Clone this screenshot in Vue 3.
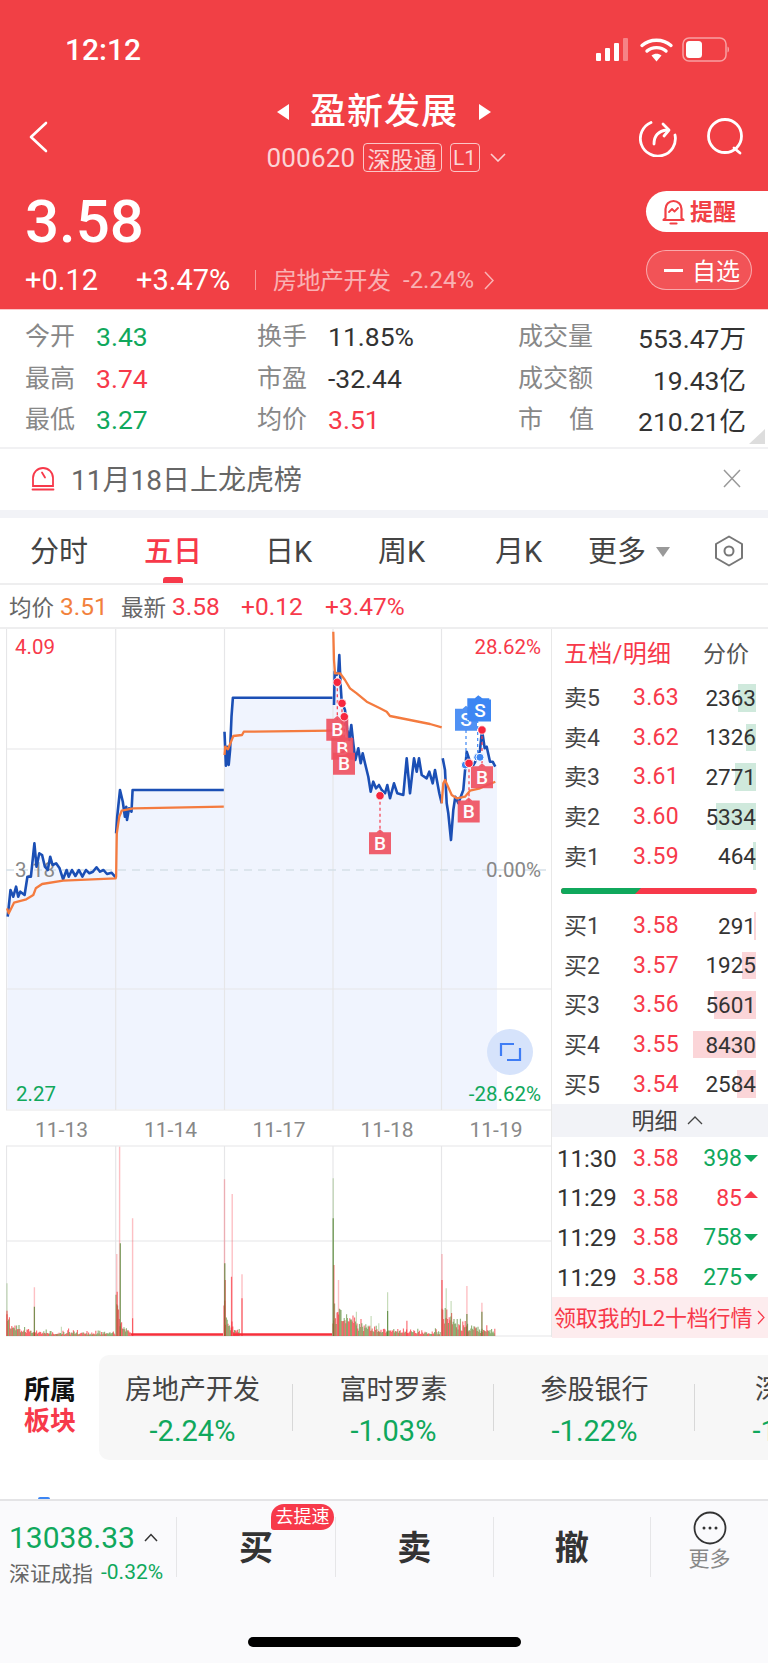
<script setup>
const z3 = (a) => { const o = []; for (let i = 0; i < a.length; i += 2) o.push([+(a[i] / 2.851).toFixed(1), +(620 + a[i + 1] / 3).toFixed(1)]); return o }
const z9 = (a) => { const o = []; for (let i = 0; i < a.length; i += 2) o.push([+(310 + a[i] / 3).toFixed(1), +(630 + a[i + 1] / 3).toFixed(1)]); return o }
const pts = (p) => p.map((q) => q.join(',')).join(' ')

const b1 = z3([22,890,30,810,38,830,46,800,52,830,58,815,70,825,78,770,88,770,98,670,104,740,112,700,120,705,128,740,136,750,143,710,150,735,160,730,170,745,180,778,190,750,196,770,205,750,215,768,225,750,235,770,245,750,255,760,265,755,275,742,285,755,295,750,305,762,318,758,330,772])
const b2 = z3([331,640,334,590,342,510,350,545,356,590,360,560,362,600,368,565,375,575,378,510,638,510])
const b3 = z3([640,335,644,437,648,380,652,435,656,390,660,290,664,233,948,233])
const b4 = z9([72,225,74,125,80,135,85,125,88,75,92,170,95,215,105,240,112,300,118,330,124,285,130,340,136,390,145,355,152,400,158,370,165,400,175,440,182,485,190,455,198,475,207,465,215,480,225,490,232,465,240,505,252,460,262,490,280,495,290,385,300,490,312,385,320,425,327,385,335,435,350,445,358,425,368,460,375,420,388,490,395,520])
const b5 = z9([398,385,405,420,410,520,415,550,423,630,430,540,436,500,445,520,460,480,470,365,480,395,490,405,505,380,510,360,516,300,524,355,530,350,540,395,548,395,556,410])
const blue = [b1, b2, b3, b4, b5].map(pts)
const fill = pts([[7, 1109], ...b1, ...b2, ...b3, ...b4, ...b5, [497, 767], [497, 1109]])

const orange = [
  pts(z3([20,865,25,880,40,848,75,838,95,825,102,805,120,792,180,782,330,775,331,770,333,640,340,590,347,572,380,565,638,560])),
  pts(z3([640,405,642,380,650,388,665,348,690,345,695,335,948,332])),
  pts(z9([70,5,72,90,75,130,90,130,105,150,120,175,140,190,170,215,210,235,230,245,240,258,300,270,360,282,395,292])),
  pts(z9([395,520,400,460,405,450,412,465,425,495,440,505,465,500,480,482,510,475,556,455]))
]

const vlines = [115.7, 224.5, 333, 441.5]
const dates = [{ x: 61.5, t: '11-13' }, { x: 170.5, t: '11-14' }, { x: 279, t: '11-17' }, { x: 387, t: '11-18' }, { x: 496, t: '11-19' }]

const tags = [
  ...z9([468,268]).map((p) => ({ p, t: 'S', c: 's', o: 0.9 })),
  ...z9([505,236,510,240]).map((p) => ({ p, t: 'S', c: 's', o: 1 })),
  ...z9([82,298,97,355,102,400,210,638,476,543,516,440]).map((p) => ({ p, t: 'B', c: 'b', o: 0.9 }))
]
const links = z9([82,157,82,270,96,220,96,330,103,260,103,375,210,497,210,610,477,400,477,515,516,300,516,410])
const linkPairs = [0, 2, 4, 6, 8, 10].map((i) => [links[i], links[i + 1]])
const blueLinks = [z9([468,300,468,405]), z9([503,270,503,382])]
const redDots = z9([82,157,96,220,103,260,210,497,477,400,516,300])
const blueDots = z9([466,405,503,382,510,382])

// volume bars
let seed = 42
const rnd = () => { seed = (seed * 9301 + 49297) % 233280; return seed / 233280 }
const BASE = 1336
const vy = (y) => 1130 + y / 3
const mk = (list) => list.map(([x, y]) => `M${(x / 2.851).toFixed(1)} ${BASE}V${vy(y).toFixed(1)}`).join('')
const redLight = mk([[341,50],[333,372],[378,265],[640,148],[662,192],[690,433],[965,450],[1260,372],[1331,468],[1374,518],[98,472]])
const greenLight = mk([[20,460],[950,145],[1105,487],[1272,475],[1286,513],[1016,545],[1058,558],[175,590],[1080,580]])
const redDark = mk([[20,542],[378,565],[660,440],[690,505],[952,405],[1260,450],[1160,572],[334,485],[642,450]])
const greenDark = mk([[98,530],[343,340],[641,400],[950,265],[1105,543],[1331,552],[1374,545]])
const days = [[7, 115, 16, 12], [116, 131, 42, 5], [224, 240, 38, 5], [333, 441, 34, 24], [442, 495, 32, 20]]
let vr = ''
let vg = ''
for (const [a, b, amp, tau] of days) {
  for (let x = a; x <= b; x += 0.8) {
    const h = 1.5 + amp * Math.exp(-(x - a) / tau) * (0.3 + rnd() * 0.7) + rnd() * rnd() * 7
    const s = `M${x.toFixed(1)} ${BASE}V${(BASE - h).toFixed(1)}`
    if (rnd() > 0.5) vr += s
    else vg += s
  }
}

const sells = [
  { l: '卖5', p: '3.63', q: 2363, w: 18 }, { l: '卖4', p: '3.62', q: 1326, w: 10 },
  { l: '卖3', p: '3.61', q: 2771, w: 21 }, { l: '卖2', p: '3.60', q: 5334, w: 40 },
  { l: '卖1', p: '3.59', q: 464, w: 3 }
]
const buys = [
  { l: '买1', p: '3.58', q: 291, w: 2 }, { l: '买2', p: '3.57', q: 1925, w: 14 },
  { l: '买3', p: '3.56', q: 5601, w: 42 }, { l: '买4', p: '3.55', q: 8430, w: 63 },
  { l: '买5', p: '3.54', q: 2584, w: 19 }
]
const ticks = [
  { t: '11:30', q: 398, up: false }, { t: '11:29', q: 85, up: true },
  { t: '11:29', q: 758, up: false }, { t: '11:29', q: 275, up: false }
]
const sectors = [
  { n: '房地产开发', v: '-2.24%' }, { n: '富时罗素', v: '-1.03%' },
  { n: '参股银行', v: '-1.22%' }, { n: '深股通', v: '-1.10%' }
]
</script>

<template>
  <div class="page">
    <header class="head">
      <div class="status">
        <span class="clock">12:12</span>
        <svg class="st-icons" width="134" height="26" viewBox="0 0 134 26">
          <g fill="#fff">
            <rect x="1" y="16" width="5" height="8" rx="1" />
            <rect x="10" y="11" width="5" height="13" rx="1" />
            <rect x="19" y="6" width="5" height="18" rx="1" />
            <rect x="28" y="1" width="5" height="23" rx="1" opacity=".35" />
          </g>
          <g fill="none" stroke="#fff" stroke-width="3.4" stroke-linecap="round">
            <path d="M47 8.5c8-7 21-7 29 0" />
            <path d="M52 14c5-4.5 14-4.5 19 0" />
          </g>
          <path d="M56.5 18.5c3-2.4 7-2.4 10 0L61.5 24.5z" fill="#fff" />
          <rect x="88" y="1" width="43" height="23" rx="6" fill="none" stroke="#fff" stroke-opacity=".5" stroke-width="1.5" />
          <rect x="91" y="4" width="16" height="17" rx="3.5" fill="#fff" />
          <path d="M132.5 9.5c2 .6 2 5.400 0 6z" fill="#fff" fill-opacity=".5" />
        </svg>
      </div>

      <div class="nav">
        <svg class="back" width="20" height="32" viewBox="0 0 20 32"><path d="M18 2 3 16l15 14" fill="none" stroke="#fff" stroke-width="2.600" stroke-linecap="round" stroke-linejoin="round" /></svg>
        <div class="nav-mid">
          <div class="title-row">
            <i class="tri-l"></i>
            <span class="title">盈新发展</span>
            <i class="tri-r"></i>
          </div>
          <div class="code-row">
            <span class="code">000620</span>
            <span class="tag tag-wide">深股通</span>
            <span class="tag tag-l1">L1</span>
            <svg width="16" height="9" viewBox="0 0 16 9"><path d="M1 1l7 7 7-7" fill="none" stroke="#fff" stroke-opacity=".75" stroke-width="1.600" /></svg>
          </div>
        </div>
        <div class="nav-icons">
          <svg width="38" height="40" viewBox="0 0 38 40" fill="none" stroke="#fff" stroke-width="2.800" stroke-linecap="round" stroke-linejoin="round">
            <path d="M12 5.500A17.500 17.500 0 1 0 36 18" />
            <path d="M15 27c0-8 4-13 13-14" />
            <path d="M24 7l6 6-5 6" />
          </svg>
          <svg width="40" height="40" viewBox="0 0 40 40" fill="none" stroke="#fff" stroke-width="2.800" stroke-linecap="round">
            <circle cx="19" cy="19" r="16.500" />
            <path d="M28 31l6 5" />
          </svg>
        </div>
      </div>

      <div class="quote">
        <div class="quote-l">
          <div class="price">3.58</div>
          <div class="delta">
            <span class="d1">+0.12</span>
            <span class="d2">+3.47%</span>
            <i class="vbar"></i>
            <span class="ind">房地产开发</span>
            <span class="ind-v">-2.24%</span>
            <svg width="10" height="19" viewBox="0 0 10 19"><path d="M1 1l8 8.500-8 8.500" fill="none" stroke="#fff" stroke-opacity=".6" stroke-width="1.500" /></svg>
          </div>
        </div>
        <div class="quote-r">
          <div class="remind">
            <svg width="23" height="26" viewBox="0 0 23 26" fill="none" stroke="#f14045" stroke-width="2.200" stroke-linejoin="round" stroke-linecap="round">
              <path d="M3.500 19V10a8 8 0 0 1 16 0v9l2 2H1.500z" />
              <path d="M8.500 24.500h6" />
              <path d="M7 13l3-3 2.500 2.500L16 9" stroke-width="1.800" />
            </svg>
            <span>提醒</span>
          </div>
          <div class="fav"><i class="minus"></i><span>自选</span></div>
        </div>
      </div>
    </header>

    <section class="stats">
      <div class="st"><span class="lb">今开</span><span class="v green">3.43</span></div>
      <div class="st"><span class="lb">换手</span><span class="v">11.85%</span></div>
      <div class="st st-r"><span class="lb lb3">成交量</span><span class="v">553.47万</span></div>
      <div class="st"><span class="lb">最高</span><span class="v red">3.74</span></div>
      <div class="st"><span class="lb">市盈</span><span class="v">-32.44</span></div>
      <div class="st st-r"><span class="lb lb3">成交额</span><span class="v">19.43亿</span></div>
      <div class="st"><span class="lb">最低</span><span class="v green">3.27</span></div>
      <div class="st"><span class="lb">均价</span><span class="v red">3.51</span></div>
      <div class="st st-r"><span class="lb lb3 lb-j"><b>市</b><b>值</b></span><span class="v">210.21亿</span></div>
      <i class="corner"></i>
    </section>

    <section class="notice">
      <div class="notice-l">
        <svg width="24" height="25" viewBox="0 0 24 25" fill="none" stroke="#f7394a" stroke-width="1.800" stroke-linecap="round">
          <path d="M2 20V12a10 10 0 0 1 20 0v8z" />
          <path d="M1.500 23.500h21" />
          <path d="M11 6.500l3 5" />
        </svg>
        <span>11月18日上龙虎榜</span>
      </div>
      <svg width="18" height="19" viewBox="0 0 18 19"><path d="M1 1l16 17M17 1 1 18" stroke="#999" stroke-width="1.500" fill="none" /></svg>
    </section>

    <nav class="tabs">
      <span class="tab" style="left:30px">分时</span>
      <span class="tab on" style="left:144px">五日</span>
      <span class="tab" style="left:265px">日K</span>
      <span class="tab" style="left:378px">周K</span>
      <span class="tab" style="left:495px">月K</span>
      <span class="tab" style="left:588px">更多</span>
      <i class="more-tri"></i>
      <svg class="hex" width="30" height="32" viewBox="0 0 30 32" fill="none" stroke="#777" stroke-width="2">
        <path d="M15 1.500 28 9v14l-13 7.500L2 23V9z" stroke-linejoin="round" />
        <circle cx="15" cy="16" r="4.500" />
      </svg>
      <i class="under"></i>
    </nav>

    <div class="legend">
      <span class="g">均价</span><span class="o">3.51</span>
      <span class="g g2">最新</span><span class="r r1">3.58</span>
      <span class="r r2">+0.12</span>
      <span class="r r3">+3.47%</span>
    </div>

    <section class="board">
      <svg class="chart" width="545" height="708" viewBox="6 629 545 708">
        <polygon :points="fill" fill="#f0f4fe" />
        <g stroke="#e6e6e8" stroke-width="1.200">
          <path d="M6.500 629V1110M6 749H551M6 989H551M6 1110H551" fill="none" />
          <path v-for="x in vlines" :key="x" :d="`M${x} 629V1110`" fill="none" />
          <path d="M6.500 1146V1336M6 1146H551M6 1241H551M6 1336H551" fill="none" />
          <path v-for="x in vlines" :key="'v' + x" :d="`M${x} 1146V1336`" fill="none" />
        </g>
        <path d="M6 870H551" stroke="#d5dfe8" stroke-width="1.400" stroke-dasharray="8 6" fill="none" />

        <text x="15" y="877" class="cl gray-f">3.18</text>
        <polyline v-for="(p, i) in blue" :key="'b' + i" :points="p" class="ln-b" />
        <polyline v-for="(p, i) in orange" :key="'o' + i" :points="p" class="ln-o" />

        <path v-for="(l, i) in blueLinks" :key="'bl' + i" :d="`M${l[0][0]} ${l[0][1]}V${l[1][1]}`" stroke="#3d86f3" stroke-width="1.200" stroke-dasharray="3 3" fill="none" />
        <path v-for="(l, i) in linkPairs" :key="'rl' + i" :d="`M${l[0][0]} ${l[0][1]}V${l[1][1]}`" stroke="#f7394a" stroke-width="1.200" stroke-dasharray="3 3" fill="none" />
        <circle v-for="(d, i) in blueDots" :key="'bd' + i" :cx="d[0]" :cy="d[1]" r="4" fill="#3d86f3" stroke="#fff" />

        <g v-for="(t, i) in tags" :key="'t' + i" :opacity="t.o">
          <path :d="`M${t.p[0] - 11} ${t.p[1] - 10.500}h7.500l3.500-3 3.500 3h7.500v22h-22z`" :fill="t.c === 's' ? '#3d86f3' : '#ef4f5f'" />
          <text :x="t.p[0]" :y="t.p[1] + 7" class="tg">{{ t.t }}</text>
        </g>
        <circle v-for="(d, i) in redDots" :key="'rd' + i" :cx="d[0]" :cy="d[1]" r="4.200" fill="#f7273f" stroke="#fff" stroke-width=".8" />

        <text x="15" y="654" class="cl red-f">4.09</text>
        <text x="541" y="654" class="cl red-f end">28.62%</text>
        <text x="541" y="877" class="cl gray-f end">0.00%</text>
        <text x="16" y="1101" class="cl green-f">2.27</text>
        <text x="541" y="1101" class="cl green-f end">-28.62%</text>

        <circle cx="510" cy="1052" r="23" fill="#d6e3fb" />
        <path d="M501 1056v-12h13M520 1048v12h-13" fill="none" stroke="#3f7df5" stroke-width="2.200" />

        <text v-for="d in dates" :key="d.t" :x="d.x" y="1137" class="dt">{{ d.t }}</text>

        <path :d="vr" stroke="#f7272f" stroke-opacity=".7" stroke-width="1.100" fill="none" />
        <path :d="vg" stroke="#5f8f3a" stroke-opacity=".7" stroke-width="1.100" fill="none" />
        <path d="M131 1334.500H223M233 1334.500H332" stroke="#f7303c" stroke-width="2.500" fill="none" />
        <path :d="redLight" stroke="#f7303c" stroke-opacity=".3" stroke-width="1.400" fill="none" />
        <path :d="greenLight" stroke="#5f9c3a" stroke-opacity=".35" stroke-width="1.200" fill="none" />
        <path :d="redDark" stroke="#f7272f" stroke-opacity=".65" stroke-width="1.200" fill="none" />
        <path :d="greenDark" stroke="#4e7f2c" stroke-opacity=".75" stroke-width="1.200" fill="none" />
      </svg>

      <aside class="panel">
        <div class="p-head"><span class="p-on">五档/明细</span><span class="p-off">分价</span></div>
        <div v-for="r in sells" :key="r.l" class="row">
          <i class="bar bar-g" :style="{ width: r.w + 'px' }"></i>
          <span class="r-l">{{ r.l }}</span><span class="r-p">{{ r.p }}</span><span class="r-q">{{ r.q }}</span>
        </div>
        <div class="split"><i class="split-g"></i></div>
        <div v-for="r in buys" :key="r.l" class="row">
          <i class="bar bar-r" :style="{ width: r.w + 'px' }"></i>
          <span class="r-l">{{ r.l }}</span><span class="r-p">{{ r.p }}</span><span class="r-q">{{ r.q }}</span>
        </div>
        <div class="strip">
          <span>明细</span>
          <svg width="16" height="9" viewBox="0 0 16 9"><path d="M1 8l7-7 7 7" fill="none" stroke="#444" stroke-width="1.300" /></svg>
        </div>
        <div class="tick-list">
          <div v-for="(t, i) in ticks" :key="i" class="tick">
            <span class="t-t">{{ t.t }}</span><span class="r-p">3.58</span>
            <span class="t-q" :class="t.up ? 'up' : 'dn'">{{ t.q }}</span>
            <i :class="t.up ? 'tri-up' : 'tri-dn'"></i>
          </div>
        </div>
        <div class="promo"><span>领取我的L2十档行情</span>
          <svg width="8" height="15" viewBox="0 0 8 15"><path d="M1 1l6 6.500-6 6.500" fill="none" stroke="#f7394a" stroke-width="1.200" /></svg>
        </div>
      </aside>
    </section>

    <section class="sector">
      <div class="sec-title"><span>所属</span><span class="sec-red">板块</span></div>
      <div class="sec-card">
        <div class="sec-row">
          <div v-for="s in sectors" :key="s.n" class="sec-item">
            <div class="sec-n">{{ s.n }}</div>
            <div class="sec-v">{{ s.v }}</div>
          </div>
        </div>
      </div>
    </section>

    <div class="peek"><i></i></div>

    <footer class="foot">
      <div class="foot-row">
        <div class="idx">
          <div class="idx-top">
            <span class="idx-num">13038.33</span>
            <svg width="14" height="9" viewBox="0 0 14 9"><path d="M1 8l6-6.500L13 8" fill="none" stroke="#333" stroke-width="1.500" /></svg>
          </div>
          <div class="idx-sub"><span class="idx-name">深证成指</span><span class="idx-v">-0.32%</span></div>
        </div>
        <div class="btn btn-buy"><span class="btn-t">买</span><span class="badge">去提速</span></div>
        <div class="btn btn-mid"><span class="btn-t">卖</span></div>
        <div class="btn btn-mid"><span class="btn-t">撤</span></div>
        <div class="more">
          <svg width="34" height="34" viewBox="0 0 34 34" fill="none">
            <circle cx="17" cy="17" r="15.500" stroke="#333" stroke-width="1.800" />
            <circle cx="11" cy="17" r="1.500" fill="#333" /><circle cx="17" cy="17" r="1.500" fill="#333" /><circle cx="23" cy="17" r="1.500" fill="#333" />
          </svg>
          <span>更多</span>
        </div>
      </div>
      <i class="home"></i>
    </footer>
  </div>
</template>

<style scoped>
.page {
  width: 768px;
  height: 1663px;
  overflow: hidden;
  background: #fff;
  font-family: Roboto, "Noto Sans CJK SC", sans-serif;
  color: #333;
  position: relative;
}
i { display: block; font-style: normal; }

.head { height: 309px; background: #f14045; color: #fff; box-shadow: 0 1px 0 #fbc6c8; position: relative; }
.status { height: 94px; display: flex; justify-content: space-between; align-items: flex-start; padding: 0 40px 0 65px; }
.clock { font-size: 30px; font-weight: 500; line-height: 99px; }
.st-icons { margin: 37px -1px 0 0; }

.nav { height: 86px; display: flex; align-items: center; padding: 0 22px 0 28px; position: relative; }
.nav-mid { position: absolute; left: 0; right: 0; top: 0; display: flex; flex-direction: column; align-items: center; }
.nav-icons { margin-left: auto; display: flex; gap: 29px; align-items: center; }
.title-row { height: 36px; display: flex; align-items: center; gap: 21px; }
.title { font-size: 36px; line-height: 36px; font-weight: 500; letter-spacing: 1px; }
.tri-l { width: 0; height: 0; border: 8px solid transparent; border-right: 12px solid #fff; border-left: 0; }
.tri-r { width: 0; height: 0; border: 8px solid transparent; border-left: 12px solid #fff; border-right: 0; }
.code-row { height: 29px; margin-top: 13px; margin-left: 4px; display: flex; align-items: center; color: rgba(255,255,255,.78); }
.code { font-size: 26px; letter-spacing: .2px; width: 96px; }
.tag { height: 29px; box-sizing: border-box; border: 1.200px solid rgba(255,255,255,.7); border-radius: 4px; display: flex; align-items: center; justify-content: center; }
.tag-wide { width: 79px; font-size: 23px; }
.tag-l1 { width: 30px; margin-left: 8px; margin-right: 10px; font-size: 21px; }

.quote { height: 129px; display: flex; justify-content: space-between; padding-left: 25px; }
.price { font-size: 60px; line-height: 60px; margin-top: 12px; font-weight: 500; }
.delta { display: flex; align-items: center; height: 32px; margin-top: 12px; font-size: 29px; }
.d1 { width: 111px; }
.d2 { width: 119px; }
.vbar { width: 1px; height: 20px; background: rgba(255,255,255,.45); margin-right: 17px; }
.ind { font-size: 24px; color: rgba(255,255,255,.6); width: 130px; white-space: nowrap; letter-spacing: -.5px; margin-bottom: 4px; }
.ind-v { font-size: 24px; color: rgba(255,255,255,.6); width: 81px; }
.quote-r { width: 122px; padding-top: 11px; }
.remind { height: 41px; background: #fff; border-radius: 21px 0 0 21px; display: flex; align-items: center; padding-left: 16px; gap: 5px; color: #f14045; font-size: 23px; font-weight: 700; }
.remind span { margin-bottom: 4px; }
.fav { width: 106px; height: 40px; box-sizing: border-box; margin-top: 18px; border: 1.500px solid rgba(255,255,255,.5); background: rgba(255,255,255,.1); border-radius: 20px; display: flex; align-items: center; padding-left: 17px; gap: 9px; font-size: 24px; }
.fav span { margin-bottom: 2px; }
.minus { width: 19px; height: 3px; background: #fff; }

.stats { height: 140px; box-sizing: border-box; padding: 7px 22px 0 25px; display: grid; grid-template-columns: 233px 260px 1fr; grid-auto-rows: 41.500px; position: relative; border-bottom: 2px solid #f1f1f3; }
.st { display: flex; align-items: center; gap: 21px; }
.st-r { justify-content: space-between; gap: 0; }
.lb { font-size: 25px; color: #888; width: 50px; white-space: nowrap; margin-bottom: 5px; }
.st:nth-of-type(3n+2) .lb { margin-left: -1px; }
.lb3 { width: 76px; }
.lb-j { display: flex; justify-content: space-between; }
.lb-j b { font-weight: 400; }
.v { font-size: 26.500px; font-weight: 400; color: #333; }
.green { color: #10a85c; }
.red { color: #f7394a; }
.corner { position: absolute; right: 3px; bottom: 3px; width: 0; height: 0; border-left: 16px solid transparent; border-bottom: 15px solid #ddd; }

.notice { height: 69px; display: flex; align-items: center; justify-content: space-between; padding: 0 27px 3px 31px; box-sizing: border-box; border-bottom: 8px solid #f2f3f7; }
.notice-l { display: flex; align-items: center; gap: 16px; font-size: 28px; color: #666; }

.tabs { height: 67px; box-sizing: border-box; position: relative; border-bottom: 2px solid #eeeeef; }
.tab { position: absolute; top: 13px; font-size: 29px; line-height: 42px; color: #444; }
.on { color: #f7394a; font-weight: 500; }
.more-tri { position: absolute; left: 656px; top: 29px; width: 0; height: 0; border: 7.500px solid transparent; border-top: 10px solid #999; border-bottom: 0; }
.hex { position: absolute; left: 714px; top: 17px; }
.under { position: absolute; left: 163px; bottom: 0; width: 20px; height: 6px; border-radius: 3px 3px 0 0; background: #f7394a; }

.legend { height: 42px; display: flex; align-items: center; padding-left: 9px; font-size: 24.500px; box-sizing: border-box; }
.g { color: #666; font-size: 22.500px; width: 51px; }
.g2 { margin-left: 15px; }
.o { color: #f2813c; width: 46px; }
.r { color: #f7394a; }
.r1 { width: 47px; }
.r2 { margin-left: 22px; width: 62px; }
.r3 { margin-left: 22px; }

.board { display: flex; height: 710px; border-top: 2px solid #eeeeef; box-sizing: border-box; }
.chart { flex: none; margin-left: 6px; display: block; overflow: hidden; }
.ln-b { fill: none; stroke: #1b4fb5; stroke-width: 2.600; stroke-linejoin: round; }
.ln-o { fill: none; stroke: #f47b3f; stroke-width: 2.300; stroke-linejoin: round; }
.tg { font-family: Roboto, sans-serif; font-size: 19px; font-weight: 500; fill: #fff; text-anchor: middle; }
.cl { font-family: Roboto, sans-serif; font-size: 20.500px; }
.end { text-anchor: end; }
.red-f { fill: #f7394a; }
.gray-f { fill: #888; }
.green-f { fill: #10a85c; }
.dt { font-family: Roboto, sans-serif; font-size: 21px; fill: #888; text-anchor: middle; }

.panel { flex: 1; border-left: 1.500px solid #e8e8e8; min-width: 0; }
.p-head { height: 49px; display: flex; align-items: center; padding: 0 19px 0 12px; justify-content: space-between; }
.p-on { color: #f7394a; font-size: 24px; letter-spacing: .3px; margin-bottom: 4px; }
.p-off { color: #555; font-size: 23px; margin-bottom: 4px; }
.row { height: 39.600px; display: flex; align-items: center; padding: 0 12px 0 12px; position: relative; font-size: 23px; }
.bar { position: absolute; right: 12px; top: 6px; bottom: 6px; }
.bar-g { background: #cfe9dc; }
.bar-r { background: #fbd5d8; }
.r-l { width: 69px; color: #444; position: relative; margin-bottom: 3px; }
.r-p { color: #f7394a; width: 60px; position: relative; letter-spacing: .3px; }
.r-q { margin-left: auto; color: #333; position: relative; font-size: 22.500px; }
.split { height: 6px; margin: 12px 11px 12px 9px; border-radius: 3px; background: #f7394a; position: relative; overflow: hidden; }
.split-g { position: absolute; left: 0; top: 0; bottom: 0; width: 80px; background: #10a85c; clip-path: polygon(0 0, 100% 0, calc(100% - 6px) 100%, 0 100%); }
.strip { height: 33px; background: #f2f3f7; display: flex; align-items: center; justify-content: center; gap: 9px; font-size: 23px; color: #444; padding-left: 14px; }
.strip span { margin-bottom: 3px; }
.tick-list { padding-top: 2px; }
.tick { height: 39.600px; display: flex; align-items: center; padding: 0 10px 0 5px; font-size: 23px; }
.t-t { width: 76px; color: #333; font-size: 24px; }
.t-q { margin-left: auto; margin-right: 2px; }
.up { color: #f7394a; }
.dn { color: #10a85c; }
.tri-dn { width: 0; height: 0; border: 7px solid transparent; border-top: 7px solid #10a85c; border-bottom: 0; }
.tri-up { width: 0; height: 0; border: 7px solid transparent; border-bottom: 7px solid #f7394a; border-top: 0; margin-top: -7px; }
.promo { height: 41px; background: #fdecee; color: #f7394a; font-size: 22px; display: flex; align-items: center; padding-left: 2px; gap: 5px; white-space: nowrap; letter-spacing: -.2px; }
.promo span { margin-bottom: 3px; }

.sector { margin-top: 18px; height: 105px; display: flex; }
.sec-title { width: 99px; box-sizing: border-box; padding: 20px 0 0 24px; display: flex; flex-direction: column; font-size: 26px; line-height: 31px; font-weight: 700; color: #111; }
.sec-red { color: #f7394a; }
.sec-card { flex: 1; background: #f7f7f7; border-radius: 10px 0 0 10px; overflow: hidden; }
.sec-row { display: flex; margin-left: -7px; }
.sec-item { width: 201px; flex: none; text-align: center; padding-top: 18px; position: relative; }
.sec-item::after { content: ""; position: absolute; right: 0; top: 29px; height: 47px; width: 1.500px; background: #d8d8d8; }
.sec-n { font-size: 27px; line-height: 34px; color: #444; }
.sec-v { font-size: 29px; line-height: 34px; margin-top: 7px; color: #10a85c; font-weight: 400; }

.peek { height: 39px; position: relative; }
.peek i { position: absolute; left: 38px; bottom: 0; width: 12px; height: 2px; background: #3d86f3; border-radius: 6px 6px 0 0; }

.foot { height: 164px; box-sizing: border-box; background: #fafafc; border-top: 2px solid #e4e4e6; padding-top: 16px; }
.foot-row { display: flex; height: 60px; }
.idx { width: 176px; box-sizing: border-box; padding: 5px 0 0 9px; flex: none; }
.idx-top { display: flex; align-items: center; height: 30px; gap: 9px; }
.idx-num { font-size: 30px; color: #10a85c; font-weight: 400; }
.idx-sub { display: flex; align-items: center; height: 30px; margin-top: 5px; white-space: nowrap; }
.idx-name { font-size: 21px; color: #666; width: 92px; }
.idx-v { font-size: 21px; color: #10a85c; }
.btn { box-sizing: border-box; border-left: 1.500px solid #e6e6e8; display: flex; align-items: center; justify-content: center; font-size: 34px; font-weight: 700; color: #333; position: relative; }
.btn-t { margin-bottom: 3px; }
.btn-buy { width: 159px; }
.btn-mid { width: 157.500px; }
.badge { position: absolute; left: 94px; top: -13px; width: 63px; height: 26px; background: #f7394a; color: #fff; font-size: 18px; font-weight: 400; line-height: 26px; text-align: center; border-radius: 13px 13px 13px 3px; }
.more { flex: 1; border-left: 1.500px solid #e6e6e8; display: flex; flex-direction: column; align-items: center; color: #888; font-size: 21px; line-height: 26px; height: 60px; }
.more svg { margin-top: -6px; margin-bottom: 1px; }
.home { width: 273px; height: 10px; border-radius: 5px; background: #000; margin: 60px 0 0 248px; }
</style>
